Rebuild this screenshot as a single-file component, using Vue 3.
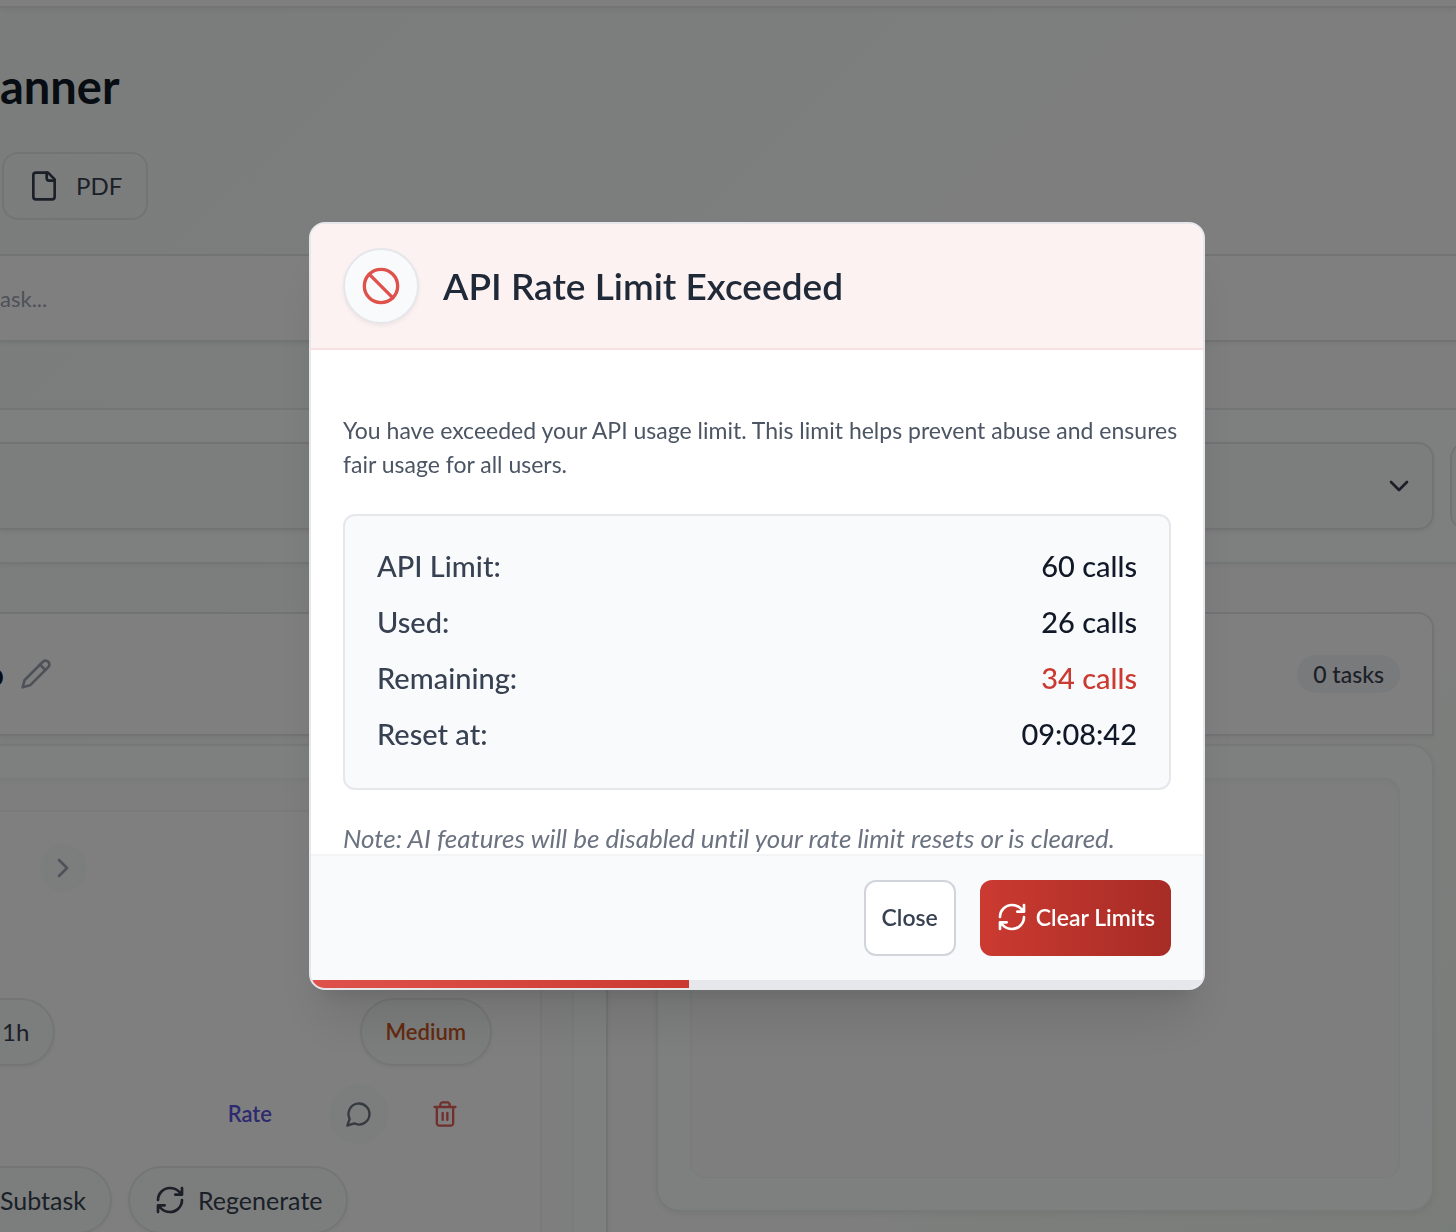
<script setup>
import { ref, computed } from 'vue'

const usage = [
  { label: 'API Limit:', value: '60 calls' },
  { label: 'Used:', value: '26 calls' },
  { label: 'Remaining:', value: '34 calls', danger: true },
  { label: 'Reset at:', value: '09:08:42' },
]
const elapsed = ref(42.4)
const barStyle = computed(() => ({ width: elapsed.value + '%' }))
</script>

<template>
  <div class="page">
    <header class="topbar"></header>

    <main class="main">
      <h1 class="title">anner</h1>

      <div class="exports">
        <button class="export-btn" type="button">
          <svg class="icon i32" viewBox="0 0 24 24"><path d="M15 2H6a2 2 0 0 0-2 2v16a2 2 0 0 0 2 2h12a2 2 0 0 0 2-2V7Z" /><path d="M14 2v4a2 2 0 0 0 2 2h4" /></svg>
          PDF
        </button>
      </div>

      <input class="task-input" type="text" placeholder="ask..." aria-label="New task" />

      <section class="filters">
        <div class="select-wrap">
          <select class="select" aria-label="Filter"><option></option></select>
          <svg class="icon i32 select-chevron" viewBox="0 0 24 24"><path d="m6 9 6 6 6-6" /></svg>
        </div>
        <button class="filter-btn" type="button" aria-label="More filters"></button>
      </section>

      <div class="board">
        <section class="column">
          <header class="col-head left">
            <h2 class="col-name"><span>o</span></h2>
            <button class="bare pencil" type="button" aria-label="Edit name">
              <svg class="icon i32" viewBox="0 0 24 24"><path d="M17 3a2.85 2.83 0 1 1 4 4L7.5 20.5 2 22l1.5-5.5Z" /><path d="m15 5 4 4" /></svg>
            </button>
          </header>
          <div class="col-body left">
            <div class="dropzone left">
              <article class="card">
                <div class="row-step">
                  <button class="round small" type="button" aria-label="Next">
                    <svg class="icon i32" viewBox="0 0 24 24"><path d="m9 18 6-6-6-6" /></svg>
                  </button>
                </div>
                <div class="row-tags">
                  <span class="pill time">1h</span>
                  <span class="pill priority">Medium</span>
                </div>
                <div class="row-actions">
                  <a class="rate" href="#">Rate</a>
                  <button class="round" type="button" aria-label="Comment">
                    <svg class="icon i28" viewBox="0 0 24 24"><path d="M7.9 20A9 9 0 1 0 4 16.1L2 22Z" /></svg>
                  </button>
                  <button class="bare trash" type="button" aria-label="Delete">
                    <svg class="icon i28" viewBox="0 0 24 24"><path d="M3 6h18M19 6v14c0 1-1 2-2 2H7c-1 0-2-1-2-2V6M8 6V4c0-1 1-2 2-2h4c1 0 2 1 2 2v2M10 11v6M14 11v6" /></svg>
                  </button>
                </div>
                <div class="row-buttons">
                  <button class="pill subtask" type="button">Subtask</button>
                  <button class="pill regen" type="button">
                    <svg class="icon i32" viewBox="0 0 24 24"><path d="M3 12a9 9 0 0 1 9-9 9.75 9.75 0 0 1 6.74 2.74L21 8M21 3v5h-5M21 12a9 9 0 0 1-9 9 9.75 9.75 0 0 1-6.74-2.74L3 16M8 16H3v5" /></svg>
                    Regenerate
                  </button>
                </div>
              </article>
            </div>
          </div>
        </section>

        <section class="column">
          <header class="col-head right"><span class="count">0 tasks</span></header>
          <div class="col-body right"><div class="dropzone right"></div></div>
        </section>
      </div>
    </main>

    <div class="overlay">
      <div class="modal" role="dialog" aria-modal="true" aria-labelledby="modal-title">
        <header class="modal-head">
          <span class="badge">
            <svg class="icon i40" viewBox="0 0 24 24"><circle cx="12" cy="12" r="10" /><path d="m4.9 4.9 14.2 14.2" /></svg>
          </span>
          <h2 id="modal-title" class="modal-title">API Rate Limit Exceeded</h2>
        </header>
        <div class="modal-body">
          <p class="lead">You have exceeded your API usage limit. This limit helps prevent abuse and ensures fair usage for all users.</p>
          <dl class="usage">
            <div v-for="item in usage" :key="item.label" class="usage-row">
              <dt>{{ item.label }}</dt>
              <dd :class="{ danger: item.danger }">{{ item.value }}</dd>
            </div>
          </dl>
          <p class="note">Note: AI features will be disabled until your rate limit resets or is cleared.</p>
        </div>
        <footer class="modal-foot">
          <button class="btn close" type="button">Close</button>
          <button class="btn clear" type="button">
            <svg class="icon i32" viewBox="0 0 24 24"><path d="M3 12a9 9 0 0 1 9-9 9.75 9.75 0 0 1 6.74 2.74L21 8M21 3v5h-5M21 12a9 9 0 0 1-9 9 9.75 9.75 0 0 1-6.74-2.74L3 16M8 16H3v5" /></svg>
            Clear Limits
          </button>
        </footer>
        <div class="progress"><div class="progress-bar" :style="barStyle"></div></div>
      </div>
    </div>
  </div>
</template>

<style>
body { margin: 0; }
</style>

<style scoped>
* { box-sizing: border-box; }
h1, h2, p, dl, dd { margin: 0; }
button, input, select { font: inherit; color: inherit; margin: 0; }
button { padding: 0; display: flex; align-items: center; justify-content: center; }

.page {
  height: 100vh;
  overflow: hidden;
  font-family: Lato, "Noto Sans", sans-serif;
  font-size: 24px;
  line-height: 32px;
  font-variant-ligatures: none;
  color: #374151;
  background: linear-gradient(135deg, #f5fbf8 0%, #f7fcfa 25%, #fdfdfd 48%, #fdfdfd 68%, #f3fbf4 100%);
}
.icon { fill: none; stroke: currentColor; stroke-width: 2; stroke-linecap: round; stroke-linejoin: round; flex: none; display: block; }
.i28 { width: 28px; height: 28px; }
.i32 { width: 32px; height: 32px; }
.i40 { width: 40px; height: 40px; }

.topbar { height: 8px; background: #fff; border-bottom: 2px solid #e8eaeb; box-shadow: 0 2px 6px rgba(0, 0, 0, .06); }
.title { padding-top: 46px; font-size: 47px; line-height: 64px; font-weight: 700; color: #111827; }
.exports { display: flex; padding: 34px 0 0 2px; }
.export-btn {
  height: 68px; padding: 0 24px; gap: 16px;
  border: 2px solid #e5e7eb; border-radius: 16px; background: transparent;
}
.task-input {
  display: block; width: 100%; height: 88px; margin-top: 34px; padding: 0;
  border: 0 solid #e5e7eb; border-width: 2px 0; background: #fff; font-size: 22px;
  box-shadow: 0 2px 4px rgba(0, 0, 0, .05);
}
.task-input::placeholder { color: #9ca3af; opacity: 1; }
.filters {
  display: flex; gap: 16px; height: 156px; margin-top: 66px; padding: 32px 0;
  border: 2px solid #e9ebec; border-width: 2px 0; background: #fdfefe;
  box-shadow: 0 2px 4px rgba(0, 0, 0, .04);
}
.select-wrap { flex: 1; position: relative; }
.select {
  appearance: none; display: block; width: 100%; height: 88px; padding: 0 80px 0 24px;
  border: 2px solid #e5e7eb; border-left: 0; border-radius: 0 16px 16px 0; background: #f8fbfa;
  box-shadow: 0 2px 4px rgba(0, 0, 0, .05);
}
.select-chevron { position: absolute; right: 19px; top: 28px; }
.filter-btn { flex: none; width: 40px; height: 88px; margin-right: -34px; border: 2px solid #e5e7eb; border-radius: 16px; background: #f8fbfa; }

.board { display: grid; grid-template-columns: 608px minmax(0, 1fr); gap: 48px; margin-top: 48px; padding-right: 22px; }
.col-head {
  display: flex; align-items: center; height: 124px;
  border: 2px solid #e5e7eb; background: #fff; box-shadow: 0 2px 4px rgba(0, 0, 0, .05);
}
.col-head.left { border-left: 0; border-radius: 0 16px 0 0; }
.col-head.right { justify-content: flex-end; padding-right: 32px; border-radius: 16px 16px 0 0; }
.col-name { display: flex; justify-content: flex-end; width: 4px; overflow: hidden; font-size: 32px; font-weight: 700; color: #111827; }
.bare { border: 0; background: none; }
.pencil { margin-left: 16px; color: #9ca3af; }
.count { padding: 3px 16px; border-radius: 20px; background: #f3f4f6; font-size: 23px; font-weight: 500; }
.col-body { margin-top: 8px; padding: 32px; border: 2px solid #eef0f0; background: #fdfefe; box-shadow: 0 2px 6px rgba(0, 0, 0, .06); }
.col-body.left { padding-left: 0; border-left: 0; border-radius: 0 24px 0 0; border-right-color: #e5e7eb; }
.col-body.right { border-radius: 24px; }
.dropzone { background: #fcfdfd; box-shadow: inset 0 4px 8px rgba(0, 0, 0, .03), inset 0 0 2px rgba(0, 0, 0, .08); }
.dropzone.left { margin-left: -16px; padding: 32px 32px 0 16px; border-radius: 0 16px 0 0; }
.dropzone.right { height: 400px; border-radius: 16px; }
.card { height: 464px; padding: 32px 48px 0 0; border: 2px solid #f3f4f4; border-left: 0; background: #fff; }

.row-step { padding-left: 39px; }
.round { width: 60px; height: 60px; border: 0; border-radius: 50%; background: #f9fcfb; color: #6b7280; }
.round.small { width: 48px; height: 48px; color: #9ca3af; }
.row-tags { display: flex; justify-content: space-between; margin-top: 106px; }
.pill {
  display: flex; align-items: center; height: 68px; padding: 0 24px;
  border: 2px solid #e9eceb; border-radius: 34px; background: #f8fbfa; color: #374151;
  box-shadow: 0 2px 4px rgba(0, 0, 0, .05);
}
.pill.time { padding-left: 2px; border-left: 0; border-radius: 0 34px 34px 0; }
.pill.priority { font-size: 22px; font-weight: 600; color: #ca5422; }
.row-actions { display: flex; align-items: center; justify-content: flex-end; margin-top: 18px; padding-right: 33px; }
.rate { margin-right: 57px; font-size: 22px; font-weight: 600; color: #5b55e0; text-decoration: none; }
.trash { margin-left: 42px; color: #e0605a; }
.row-buttons { display: flex; gap: 16px; margin-top: 22px; font-size: 25px; }
.subtask { padding-left: 0; border-left: 0; border-radius: 0 34px 34px 0; }
.regen { gap: 12px; }

.overlay {
  position: fixed; inset: 0; display: flex; align-items: center; justify-content: center;
  padding: 0 0 20px 58px; background: rgba(0, 0, 0, .5);
}
.modal {
  width: 896px; max-width: 100%; overflow: hidden; border: 2px solid #e5e7eb; border-radius: 16px; background: #fff;
  box-shadow: 0 40px 50px -10px rgba(0, 0, 0, .1), 0 16px 20px -12px rgba(0, 0, 0, .1);
}
.modal-head { display: flex; align-items: center; gap: 24px; padding: 24px 32px; border-bottom: 2px solid #f9e1e1; background: #fcf2f1; }
.badge {
  display: flex; align-items: center; justify-content: center; width: 76px; height: 76px;
  border: 2px solid #e5e7eb; border-radius: 50%; background: #f9fafc; color: #df524b;
  box-shadow: 0 2px 4px rgba(0, 0, 0, .06);
}
.modal-title { font-size: 37px; line-height: 56px; font-weight: 600; color: #1f2937; }
.modal-body { padding: 63px 32px 0; }
.lead { margin-right: -16px; font-size: 23px; line-height: 34px; color: #4b5563; }
.usage { display: flex; flex-direction: column; gap: 16px; margin-top: 33px; padding: 30px 32px 34px; border: 2px solid #e5e7eb; border-radius: 12px; background: #f9fafc; }
.usage-row { display: flex; justify-content: space-between; font-size: 29px; line-height: 40px; font-weight: 500; }
.usage-row dd { color: #111827; }
.usage-row dd.danger { color: #cb3a31; }
.note { margin-top: 32px; font-size: 26px; font-style: italic; color: #6b7280; white-space: nowrap; }
.modal-foot { display: flex; justify-content: flex-end; gap: 24px; padding: 24px 32px; border-top: 2px solid #f3f4f6; background: #f9fafc; }
.btn { height: 76px; padding: 0 16px 2px; border: 2px solid #d1d5db; border-radius: 12px; font-size: 23px; font-weight: 600; }
.close { background: #fff; }
.clear { gap: 8px; border: 0; background: linear-gradient(to right, #cb3a31, #a62c25); color: #fff; }
.progress { height: 8px; background: #e5e7eb; }
.progress-bar { height: 100%; background: linear-gradient(to right, #df524b, #cb3a31); }
</style>
